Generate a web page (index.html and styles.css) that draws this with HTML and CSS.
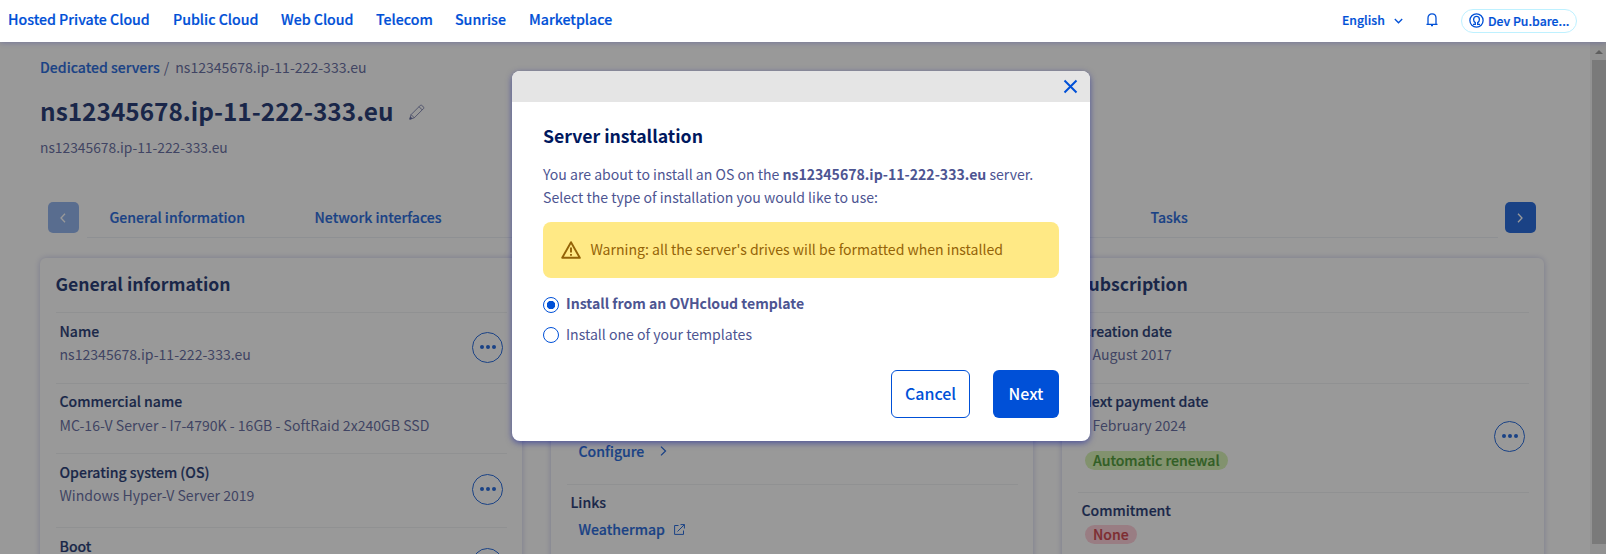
FILE: index.html
```html
<!DOCTYPE html>
<html lang="en">
<head>
<meta charset="utf-8">
<title>Server installation</title>
<link rel="stylesheet" href="styles.css">
</head>
<body>
<header class="topbar">
  <nav class="nav">
    <a class="nav-hosted">Hosted Private Cloud</a>
    <a class="nav-public">Public Cloud</a>
    <a class="nav-web">Web Cloud</a>
    <a class="nav-telecom">Telecom</a>
    <a class="nav-sunrise">Sunrise</a>
    <a class="nav-market">Marketplace</a>
  </nav>
  <div class="tools">
    <span class="lang">English</span>
    <svg class="lang-arrow" width="9" height="6" viewBox="0 0 9 6"><path d="M.8 1l3.700 3.800L8.200 1"/></svg>
    <svg class="bell" width="12" height="14" viewBox="0 0 12 14"><path d="M.5 11.300h11M2 11V5C2 2.500 3.700.9 6 .9s4 1.600 4 4.100v6M5 12.700h2"/></svg>
    <div class="user">
      <svg class="user-icon" width="15" height="15" viewBox="0 0 15 15"><circle cx="7.500" cy="7.500" r="6.600"/><path d="M4 11.300h2.300V9.600C5.100 8.900 4.600 7.900 4.600 6.500c0-1.800 1.200-3.100 2.900-3.100s2.900 1.300 2.900 3.100c0 1.400-.5 2.400-1.700 3.100v1.700H11"/></svg>
      <span>Dev Pu.bare...</span>
    </div>
  </div>
</header>

<div class="viewport">
  <main class="page">
    <div class="crumbs"><a>Dedicated servers</a><span class="slash">/</span><span class="crumb-end">ns12345678.ip-11-222-333.eu</span></div>
    <div class="heading">
      <h1>ns12345678.ip-11-222-333.eu</h1>
      <svg class="pencil" width="16" height="16" viewBox="0 0 16 16"><path d="M.8 15.200l1.300-4.600L11.500 1.200c.8-.8 4.100 2.200 3.200 3.200L5.300 13.800zM2.100 10.600l3.200 3.200M10 2.700l3.200 3.200"/><path class="tip" d="M.8 15.200l.7-2.300 1.500 1.600z"/></svg>
    </div>
    <p class="subtitle">ns12345678.ip-11-222-333.eu</p>

    <div class="tabs">
      <button class="tab-btn tab-prev"><svg width="6" height="10" viewBox="0 0 6 10"><path d="M5 .8L1 5l4 4.200"/></svg></button>
      <div class="tab-list"><a class="tab-general">General information</a><a class="tab-net">Network interfaces</a><a class="tab-tasks">Tasks</a></div>
      <button class="tab-btn"><svg width="6" height="10" viewBox="0 0 6 10"><path d="M1 .8L5 5 1 9.200"/></svg></button>
    </div>

    <div class="cards">
      <section class="card">
        <h2>General information</h2>
        <div class="row h71"><div><b>Name</b><span>ns12345678.ip-11-222-333.eu</span></div><i class="more"></i></div>
        <div class="row h70"><div><b>Commercial name</b><span>MC-16-V Server - I7-4790K - 16GB - SoftRaid 2x240GB SSD</span></div></div>
        <div class="row h74"><div><b>Operating system (OS)</b><span>Windows Hyper-V Server 2019</span></div><i class="more"></i></div>
        <div class="row h74"><div><b>Boot</b></div><i class="more"></i></div>
      </section>
      <section class="card card-mid">
        <div class="service">
          <a class="link">Configure<svg class="go" width="7" height="10" viewBox="0 0 7 10"><path d="M1 .6L5.500 5 1 9.400"/></svg></a>
        </div>
        <div class="links">
          <b>Links</b>
          <a class="link">Weathermap<svg class="ext" width="11" height="11" viewBox="0 0 11 11"><path d="M4.500 1.500H.6v8.900h8.900V6.500M6.500.6h3.900v3.900M10.400.6L3.500 7.500"/></svg></a>
        </div>
      </section>
      <section class="card">
        <h2>Subscription</h2>
        <div class="row h71"><div><b>Creation date</b><span>1 August 2017</span></div></div>
        <div class="row h109"><div><b>Next payment date</b><span>1 February 2024</span><em class="badge ok">Automatic renewal</em></div><i class="more"></i></div>
        <div class="row commitment"><div><b>Commitment</b><em class="badge none">None</em></div></div>
      </section>
    </div>
  </main>
  <div class="scrollbar"><i class="arrow"></i><i class="thumb"></i></div>
  <div class="backdrop"></div>
</div>

<div class="modal">
  <div class="modal-head"><svg width="15" height="15" viewBox="0 0 15 15"><path d="M1.500 1.500l12 12M13.500 1.500l-12 12"/></svg></div>
  <div class="modal-body">
    <h3>Server installation</h3>
    <p class="intro">You are about to install an OS on the <strong>ns12345678.ip-11-222-333.eu</strong> server.</p>
    <p class="select-type">Select the type of installation you would like to use:</p>
    <div class="warning">
      <svg width="20" height="18" viewBox="0 0 20 18"><path class="tri" d="M10 1.200L18.800 16.800H1.200z"/><path class="bang" d="M10 6.500v5M10 13v1.800"/></svg>
      <span>Warning: all the server's drives will be formatted when installed</span>
    </div>
    <label class="radio checked"><i></i><span>Install from an OVHcloud template</span></label>
    <label class="radio"><i></i><span>Install one of your templates</span></label>
    <div class="actions"><button class="cancel">Cancel</button><button class="next">Next</button></div>
  </div>
</div>
</body>
</html>
```
FILE: styles.css
```css
* { box-sizing: border-box; }
body {
  margin: 0;
  width: 1606px;
  height: 554px;
  overflow: hidden;
  position: relative;
  font-family: "Noto Sans CJK JP", "Noto Sans CJK SC", sans-serif;
  font-size: 14.07px;
  line-height: 24px;
  color: #4d5592;
}
h1, h2, h3, p { margin: 0; }
button { font: inherit; border: 0; padding: 0; }
svg { fill: none; stroke: #0050d7; display: block; flex: none; }
a, b { font-weight: 500; -webkit-text-stroke: .2px; }
a { color: #0050d7; }
a, b, span, h1, h2, h3, p, button, em { white-space: nowrap; }

.topbar {
  position: relative;
  z-index: 1;
  height: 42px;
  padding: 7px 29px 0 8px;
  display: flex;
  justify-content: space-between;
  background: #fff;
  box-shadow: 0 0 6px rgba(0, 14, 156, .3);
}
.nav { display: flex; font-size: 14.17px; }
.nav-hosted { width: 165px; }
.nav-public { width: 108px; }
.nav-web { width: 95px; }
.nav-telecom { width: 79px; }
.nav-sunrise { width: 74px; }
.tools { display: flex; color: #0050d7; font-weight: 500; font-size: 12.25px; -webkit-text-stroke: .2px; }
.lang { width: 52px; margin-top: 1px; }
.tools svg { stroke-width: 1.3; }
.tools .lang-arrow { margin: 11px 23px 0 0; }
.tools .bell { margin: 6px 23px 0 0; }
.user {
  width: 116px;
  height: 24px;
  margin-top: 2px;
  padding-left: 7px;
  border: 1px solid #bef1ff;
  border-radius: 12px;
  display: flex;
  align-items: center;
  gap: 4px;
  line-height: 22px;
}
.user span { padding-bottom: 1px; }
.user-icon { margin-bottom: 1px; }

.viewport { height: 512px; position: relative; display: flex; overflow: hidden; }
.page { flex: 1; padding: 13px 46px 0 40px; background: #fff; }
.crumbs { display: flex; }
.slash { margin: 0 6px 0 4px; }
.heading { display: flex; margin-top: 12px; height: 40px; }
.heading h1 { font-size: 24.4px; line-height: 40px; font-weight: 700; color: #00185e; width: 369px; }
.pencil { margin-top: 13px; stroke: #4d5592; stroke-width: .8; }
.tip { fill: #4d5592; }
.subtitle { margin-top: 4px; font-size: 13.8px; }
.tabs { display: flex; justify-content: space-between; margin-top: 43px; padding: 0 8px; height: 36px; }
.tab-btn { width: 31px; height: 31px; border-radius: 5px; background: #0050d7; display: flex; align-items: center; justify-content: center; }
.tab-btn svg { stroke: #fff; stroke-width: 1.300; margin-right: 1px; }
.tab-prev { opacity: .5; }
.tab-list { width: 1411px; border-bottom: 1px solid #e8edf3; padding: 3px 0 0 23px; display: flex; }
.tab-general { width: 205px; }
.tab-net { width: 836px; }
.cards { display: flex; gap: 29px; margin-top: 20px; }
.card { width: 482px; height: 420px; padding: 0 15px 0 15.500px; border-radius: 6px; box-shadow: 0 0 6px rgba(0, 14, 156, .25); }
.card h2 { font-size: 17.600px; line-height: 30px; font-weight: 700; color: #00185e; padding-top: 11px; height: 54px; }
.row { border-top: 1px solid #eceef0; padding: 6px 4px 0; display: flex; justify-content: space-between; }
.row b, .row span, .row em { display: block; }
.row b, .links b { color: #00185e; }
.h71 { height: 71px; }
.h70 { height: 70px; padding-top: 5px; }
.h74 { height: 74px; }
.h71 span, .h74 span { margin-top: -1px; }
.h109 { height: 109px; padding-top: 5px; }
.commitment { padding-top: 5px; }
.more {
  width: 31px;
  height: 31px;
  margin-top: 14px;
  border: 1px solid #0050d7;
  border-radius: 50%;
  display: flex;
  justify-content: center;
}
.more::before {
  content: "";
  width: 4px;
  height: 4px;
  margin-top: 12px;
  border-radius: 50%;
  background: #0050d7;
  box-shadow: -6px 0 #0050d7, 6px 0 #0050d7;
}
.h71 .more { margin-top: 13px; }
.h109 .more { margin-top: 32px; }
.badge { width: max-content; font-style: normal; font-weight: 500; -webkit-text-stroke: .2px; line-height: 19px; padding: 0 8px; border-radius: 10px; margin-left: 3.500px; }
.ok { background: #d0f0a8; color: #2f8a14; margin-top: 14px; }
.none { background: #ffc6d3; color: #c8242e; margin-top: 3px; }
.card-mid { padding-top: 181px; }
.service { height: 46px; border-bottom: 1px solid #eceef0; padding: 0 12px; }
.link { display: flex; align-items: center; }
.go { margin-left: 16px; stroke-width: 1.300; }
.ext { margin-left: 9px; }
.links { padding: 5px 4px; }
.links b { display: block; }
.links .link { padding-left: 8px; margin-top: 3px; }

.scrollbar { width: 16px; background: #f1f1f1; padding: 8px 0 0 2px; }
.scrollbar i { display: block; }
.arrow { width: 8px; border: 4px solid transparent; border-top: 0; border-bottom-color: #8a8a8a; margin-left: 3px; }
.thumb { height: 484px; margin-top: 6px; background: #c1c1c1; }
.backdrop { position: absolute; inset: 0; background: rgba(51, 51, 51, .5); }

.modal {
  position: absolute;
  z-index: 2;
  left: 512px;
  top: 71px;
  width: 578px;
  height: 370px;
  border-radius: 8px;
  background: #fff;
  box-shadow: 0 2px 6px rgba(0, 14, 156, .5);
}
.modal-head { height: 31px; background: #e5e5e5; border-radius: 8px 8px 0 0; display: flex; justify-content: flex-end; padding: 8px 12px 0 0; }
.modal-head svg { stroke-width: 2; }
.modal-body { padding: 19px 31px 0; }
.modal-body h3 { font-size: 17.650px; line-height: 30px; font-weight: 700; color: #00185e; }
.intro { margin-top: 11px; height: 23px; }
.intro strong { font-weight: 700; }
.warning { height: 56px; margin-top: 13px; padding-left: 17.500px; border-radius: 8px; background: #ffe985; color: #946307; display: flex; align-items: center; gap: 10px; }
.warning svg { stroke: #946307; stroke-width: 1.900; stroke-linejoin: round; }
.warning span { padding-bottom: 2px; }
.radio { display: flex; height: 24px; margin-top: 7px; gap: 7px; }
.radio i { width: 16px; height: 16px; margin-top: 5px; border: 1px solid #0050d7; border-radius: 50%; }
.checked { margin-top: 13px; font-weight: 700; }
.checked i { margin-top: 6px; background: radial-gradient(circle, #0050d7 4px, transparent 4.500px); }
.actions { display: flex; justify-content: flex-end; gap: 23px; margin-top: 24px; }
.actions button { height: 48px; padding-bottom: 2px; border-radius: 6px; font-size: 16px; font-weight: 500; }
.cancel { width: 79px; border: 1px solid #0050d7; background: #fff; color: #0050d7; }
.next { width: 66px; background: #0050d7; color: #fff; }
```
